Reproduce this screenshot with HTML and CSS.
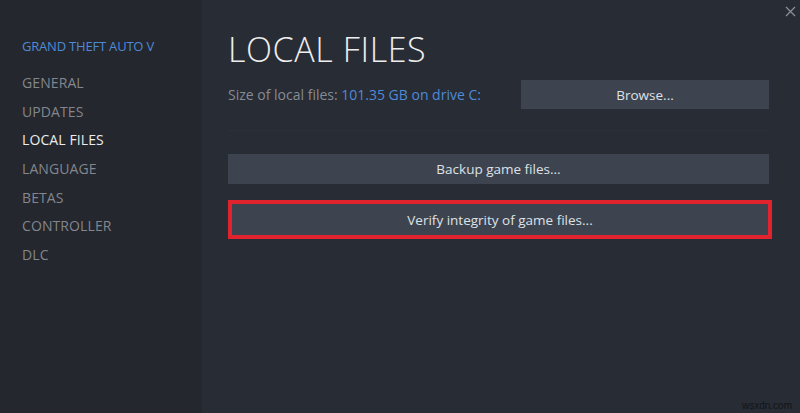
FILE: index.html
```html
<!DOCTYPE html>
<html>
<head>
<meta charset="utf-8">
<link rel="stylesheet" href="styles.css">
</head>
<body>
<div class="window">
  <aside class="sidebar">
    <div class="game-title">GRAND THEFT AUTO V</div>
    <nav class="nav">
      <div class="nav-item">GENERAL</div>
      <div class="nav-item">UPDATES</div>
      <div class="nav-item active">LOCAL FILES</div>
      <div class="nav-item">LANGUAGE</div>
      <div class="nav-item">BETAS</div>
      <div class="nav-item">CONTROLLER</div>
      <div class="nav-item">DLC</div>
    </nav>
  </aside>
  <main class="content">
    <h1 class="heading">LOCAL FILES</h1>
    <div class="size-row">
      <div class="size-text">Size of local files: <span class="size-value">101.35 GB on drive C:</span></div>
      <div class="btn btn-browse">Browse...</div>
    </div>
    <div class="separator"></div>
    <div class="btn btn-wide">Backup game files...</div>
    <div class="highlight">
      <div class="btn btn-verify">Verify integrity of game files...</div>
    </div>
  </main>
  <div class="close">
    <svg width="11" height="11" viewBox="0 0 11 11"><path d="M1 1 L10 10 M10 1 L1 10" stroke="#8a8e96" stroke-width="1.3" fill="none"/></svg>
  </div>
  <div class="watermark">wsxdn.com</div>
</div>
</body>
</html>
```

FILE: styles.css
```css
html, body {
  margin: 0;
  padding: 0;
  width: 800px;
  height: 413px;
  overflow: hidden;
  background: #272b33;
  font-family: "Open Sans", "Noto Sans", sans-serif;
}

.window {
  position: relative;
  display: flex;
  width: 800px;
  height: 413px;
}

.sidebar {
  width: 203px;
  flex: none;
  background: #24272e;
  border-right: 1px solid #292d35;
  box-sizing: border-box;
  padding: 37px 0 0 22px;
}

.game-title {
  color: #4f8ad6;
  font-size: 13px;
  line-height: 18px;
  letter-spacing: -0.2px;
}

.nav {
  margin-top: 14px;
  display: flex;
  flex-direction: column;
}

.nav-item {
  color: #83868d;
  font-size: 14px;
  line-height: 28.7px;
  height: 28.7px;
  letter-spacing: 0.1px;
}

.nav-item.active {
  color: #ececec;
}

.content {
  flex: 1;
  padding: 0 31px 0 25px;
  display: flex;
  flex-direction: column;
  background: #282c35;
}

.heading {
  margin: 27px 0 0 0;
  font-weight: 300;
  font-size: 34px;
  line-height: 44px;
  color: #eeeeee;
  letter-spacing: 0.6px;
}

.size-row {
  margin-top: 9px;
  display: flex;
  align-items: center;
  justify-content: space-between;
}

.size-text {
  color: #868b93;
  font-size: 14px;
}

.size-value {
  color: #4f8ad6;
}

.btn {
  background: #3d4450;
  color: #dde1e6;
  font-size: 13.5px;
  display: flex;
  align-items: center;
  justify-content: center;
  box-sizing: border-box;
}

.btn-browse {
  width: 248px;
  height: 29px;
}

.separator {
  height: 1px;
  background: #2c3038;
  margin-top: 21px;
}

.btn-wide {
  margin-top: 23px;
  height: 30px;
}

.highlight {
  margin-top: 16px;
  margin-right: -3px;
  border: 4px solid #e0232d;
  height: 39px;
  box-sizing: border-box;
}

.btn-verify {
  height: 100%;
}

.close {
  position: absolute;
  top: 6px;
  right: 4px;
  width: 11px;
  height: 11px;
}

.close svg {
  display: block;
}

.watermark {
  position: absolute;
  right: 8px;
  bottom: 2px;
  font-family: "Liberation Sans", sans-serif;
  font-size: 10px;
  color: #121418;
}
```
